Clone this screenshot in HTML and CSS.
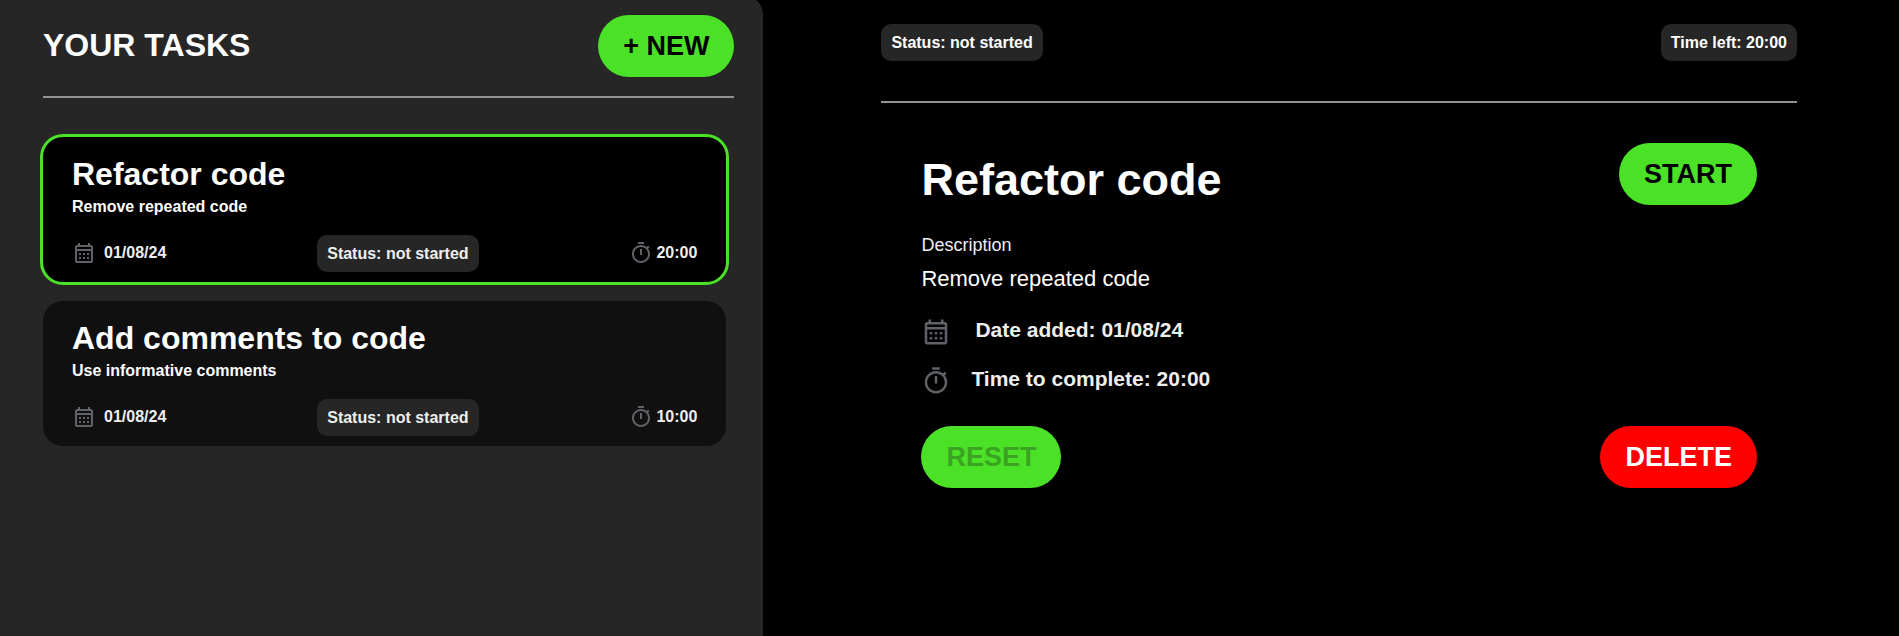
FILE: index.html
```html
<!DOCTYPE html>
<html lang="en">
<head>
<meta charset="utf-8">
<meta name="viewport" content="width=device-width, initial-scale=1">
<title>Your Tasks</title>
<link rel="stylesheet" href="styles.css">
</head>
<body>
<svg class="sprite" aria-hidden="true">
  <symbol id="calendar" viewBox="0 0 24 24">
    <path d="M19 4h-1V2h-2v2H8V2H6v2H5c-1.11 0-1.99.9-1.99 2L3 20c0 1.100.89 2 2 2h14c1.100 0 2-.9 2-2V6c0-1.100-.9-2-2-2zm0 16H5V10h14v10zm0-12H5V6h14v2zM9 14H7v-2h2v2zm4 0h-2v-2h2v2zm4 0h-2v-2h2v2zm-8 4H7v-2h2v2zm4 0h-2v-2h2v2zm4 0h-2v-2h2v2z"/>
  </symbol>
  <symbol id="timer" viewBox="0 0 24 24">
    <path d="M9 1h6v2H9zM11 8h2v6h-2zM19.030 7.390l1.420-1.420c-.43-.51-.9-.99-1.410-1.410l-1.420 1.420C16.070 4.740 14.120 4 12 4c-4.970 0-9 4.030-9 9s4.020 9 9 9 9-4.030 9-9c0-2.120-.74-4.070-1.970-5.610zM12 20c-3.870 0-7-3.130-7-7s3.130-7 7-7 7 3.130 7 7-3.130 7-7 7z"/>
  </symbol>
</svg>
<div class="app">
  <aside class="sidebar">
    <header class="sidebar-header">
      <h1 class="sidebar-title">YOUR TASKS</h1>
      <button class="button" type="button">+ NEW</button>
    </header>
    <ul class="task-list">
      <li class="task task-selected">
        <h2 class="task-title">Refactor code</h2>
        <p class="task-text">Remove repeated code</p>
        <div class="task-footer">
          <span class="task-date"><svg class="icon"><use href="#calendar"/></svg>01/08/24</span>
          <span class="pill">Status: not started</span>
          <span class="task-time"><svg class="icon"><use href="#timer"/></svg>20:00</span>
        </div>
      </li>
      <li class="task">
        <h2 class="task-title">Add comments to code</h2>
        <p class="task-text">Use informative comments</p>
        <div class="task-footer">
          <span class="task-date"><svg class="icon"><use href="#calendar"/></svg>01/08/24</span>
          <span class="pill">Status: not started</span>
          <span class="task-time"><svg class="icon"><use href="#timer"/></svg>10:00</span>
        </div>
      </li>
    </ul>
  </aside>
  <main class="detail">
    <header class="detail-header">
      <span class="pill">Status: not started</span>
      <span class="pill">Time left: 20:00</span>
    </header>
    <section class="detail-body">
      <div class="detail-row">
        <h2 class="detail-title">Refactor code</h2>
        <button class="button" type="button">START</button>
      </div>
      <h3 class="detail-label">Description</h3>
      <p class="detail-text">Remove repeated code</p>
      <div class="fact fact-date"><svg class="icon icon-large"><use href="#calendar"/></svg><span>Date added: 01/08/24</span></div>
      <div class="fact"><svg class="icon icon-large"><use href="#timer"/></svg><span>Time to complete: 20:00</span></div>
      <div class="detail-row detail-actions">
        <button class="button" type="button" disabled>RESET</button>
        <button class="button button-danger" type="button">DELETE</button>
      </div>
    </section>
  </main>
</div>
</body>
</html>
```

FILE: styles.css
```css
* {
  box-sizing: border-box;
  margin: 0;
  padding: 0;
}

body {
  background: #000;
  color: #fff;
  font-family: "Liberation Sans", Arial, sans-serif;
  font-size: 16px;
  overflow: hidden;
}

.sprite {
  display: none;
}

.app {
  display: flex;
  min-height: 100vh;
}

.sidebar {
  width: 40.2%;
  margin-top: -5px;
  padding: 20px 29px 20px 43px;
  background: #262626;
  border-top-right-radius: 20px;
}

.sidebar-header {
  display: flex;
  justify-content: space-between;
  align-items: center;
  padding-bottom: 19px;
  border-bottom: 2px solid #929292;
}

.sidebar-title {
  padding-bottom: 2px;
  font-size: 32px;
  line-height: 36px;
}

.button {
  padding: 15px 25px;
  border: 0;
  border-radius: 31px;
  background: #4be127;
  color: #000;
  font: bold 27px/32px "Liberation Sans", Arial, sans-serif;
}

.button:disabled {
  color: #3aa422;
}

.button-danger {
  background: #f00;
  color: #fff;
}

.task-list {
  display: flex;
  flex-direction: column;
  gap: 19px;
  padding: 39px 8px 0 0;
  list-style: none;
}

.task {
  padding: 19px 29px 10px;
  border-radius: 20px;
  background: #101010;
}

.task-selected {
  background: #000;
  outline: 3px solid #4be127;
}

.task-title {
  font-size: 32px;
  line-height: 36px;
}

.task-text {
  padding-top: 6px;
  font-weight: bold;
  line-height: 18px;
}

.task-footer {
  display: flex;
  justify-content: space-between;
  align-items: center;
  padding-top: 19px;
  color: #eee;
  font-weight: bold;
}

.task-date,
.task-time {
  display: flex;
  align-items: center;
  gap: 8px;
  padding-bottom: 2px;
  line-height: 24px;
}

.task-time {
  gap: 3px;
}

.icon {
  width: 24px;
  height: 24px;
  fill: #5f6368;
}

.icon-large {
  width: 30px;
  height: 30px;
}

.pill {
  padding: 9px 10px;
  border-radius: 10px;
  background: #262626;
  font-weight: bold;
  line-height: 19px;
}

.detail {
  flex: 1;
  padding: 24px 102px 0 118px;
}

.detail-header {
  display: flex;
  justify-content: space-between;
  padding-bottom: 40px;
  border-bottom: 2px solid #929292;
}

.detail-body {
  padding: 40px 40px 0;
}

.detail-row {
  display: flex;
  justify-content: space-between;
  align-items: flex-start;
}

.detail-title {
  padding-top: 11px;
  font-size: 45px;
  line-height: 52px;
}

.detail-label {
  padding-top: 29px;
  color: #eee;
  font-size: 18px;
  font-weight: normal;
  line-height: 20px;
}

.detail-text {
  padding: 11px 0 25px;
  font-size: 22px;
  line-height: 26px;
}

.fact {
  display: flex;
  gap: 20px;
  padding-bottom: 19px;
  color: #eee;
  font-size: 21px;
  font-weight: bold;
  line-height: 26px;
}

.fact-date {
  gap: 24px;
}

.detail-actions {
  padding-top: 11px;
}
```
